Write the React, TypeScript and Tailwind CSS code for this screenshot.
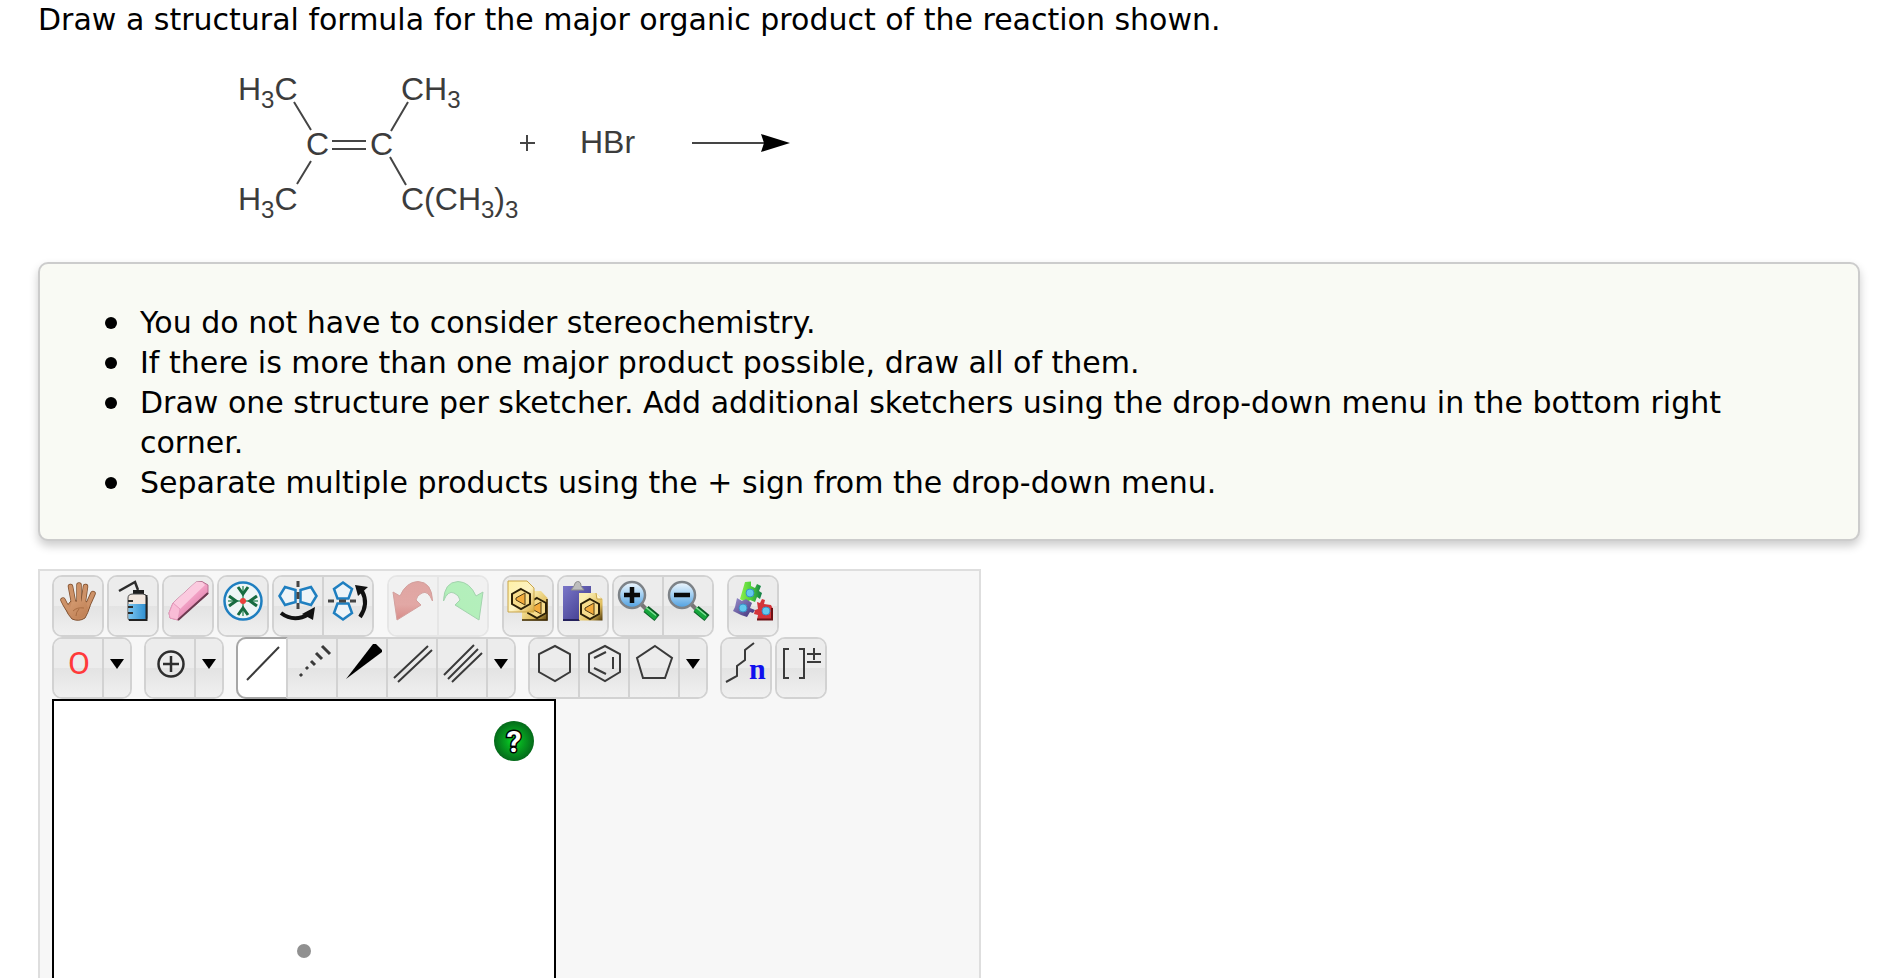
import type { ReactNode } from 'react';

interface Tool {
  id: string;
  label: string;
  icon?: ReactNode;
  active?: boolean;
}

interface ToolGroupProps {
  tools: Tool[];
  disabled?: boolean;
  menu?: string;
}

const INK = '#3a3a3a';
const BLUE = '#1f7fc0';

const notes = [
  'You do not have to consider stereochemistry.',
  'If there is more than one major product possible, draw all of them.',
  'Draw one structure per sketcher. Add additional sketchers using the drop-down menu in the bottom right corner.',
  'Separate multiple products using the + sign from the drop-down menu.',
];

function Icon({ children }: { children: ReactNode }) {
  return (
    <svg className="w-10 h-10 shrink-0 overflow-visible" viewBox="0 0 40 40" fill="none" aria-hidden="true">
      {children}
    </svg>
  );
}

function Gradients() {
  return (
    <svg className="absolute w-0 h-0" aria-hidden="true">
      <defs>
        <linearGradient id="skin" x1="0" y1="0" x2="1" y2="1">
          <stop offset="0" stopColor="#d39a70" />
          <stop offset="1" stopColor="#bd7c50" />
        </linearGradient>
        <linearGradient id="water" x1="0" y1="0" x2="1" y2="0">
          <stop offset="0" stopColor="#7cc6f0" />
          <stop offset="1" stopColor="#2f8fd0" />
        </linearGradient>
        <linearGradient id="pink" x1="0.2" y1="0.2" x2="0.75" y2="0.8">
          <stop offset="0" stopColor="#fbd3e4" />
          <stop offset="0.45" stopColor="#f5a5c8" />
          <stop offset="1" stopColor="#dd7fab" />
        </linearGradient>
        <linearGradient id="undoRed" x1="0" y1="0" x2="0" y2="1">
          <stop offset="0" stopColor="#dfa5a2" />
          <stop offset="0.6" stopColor="#e2a8a5" />
          <stop offset="1" stopColor="#d78b88" />
        </linearGradient>
        <linearGradient id="redoGreen" x1="0" y1="0" x2="1" y2="1">
          <stop offset="0" stopColor="#b4efbd" />
          <stop offset="0.6" stopColor="#b3efba" />
          <stop offset="1" stopColor="#7fc596" />
        </linearGradient>
        <linearGradient id="page" x1="0" y1="0" x2="1" y2="1">
          <stop offset="0" stopColor="#fff1a6" />
          <stop offset="0.55" stopColor="#fdf3c4" />
          <stop offset="1" stopColor="#d9a93a" />
        </linearGradient>
        <linearGradient id="pageDark" x1="0.2" y1="0.2" x2="1" y2="1">
          <stop offset="0" stopColor="#fbeeb2" />
          <stop offset="0.6" stopColor="#e0bd5c" />
          <stop offset="1" stopColor="#4e3606" />
        </linearGradient>
        <linearGradient id="board" x1="0" y1="0" x2="1" y2="1">
          <stop offset="0" stopColor="#7a76c8" />
          <stop offset="1" stopColor="#3a3688" />
        </linearGradient>
        <linearGradient id="lens" x1="0" y1="0" x2="0" y2="1">
          <stop offset="0" stopColor="#f0f7fd" />
          <stop offset="0.45" stopColor="#a9d3f3" />
          <stop offset="1" stopColor="#4d9fe0" />
        </linearGradient>
        <linearGradient id="pieceGreen" x1="0" y1="0" x2="1" y2="0">
          <stop offset="0" stopColor="#8cf04c" />
          <stop offset="0.5" stopColor="#4fd03a" />
          <stop offset="1" stopColor="#0f7a48" />
        </linearGradient>
        <linearGradient id="piecePurple" x1="0" y1="0" x2="1" y2="1">
          <stop offset="0" stopColor="#9a90cc" />
          <stop offset="1" stopColor="#3d2f78" />
        </linearGradient>
        <radialGradient id="help">
          <stop offset="0" stopColor="#0be028" />
          <stop offset="0.4" stopColor="#06a820" />
          <stop offset="1" stopColor="#04691a" />
        </radialGradient>
      </defs>
    </svg>
  );
}

const handLines = (
  <>
    <path d="M14 31 Q9 28 5 19" />
    <path d="M16 24 L12.500 5.500" />
    <path d="M21 22 L21 4" />
    <path d="M25 23 L27.500 5.500" />
    <path d="M28 28 L35 12.500" />
  </>
);

const hand = (
  <Icon>
    <g stroke="#80502e" strokeWidth="5.500" strokeLinecap="round">{handLines}</g>
    <path d="M13 20 H28 L32 25 Q30 32 27 37 Q21 41 14 38 Q10 34 7 27 Z" fill="#c98c62" stroke="#80502e" strokeWidth="1" />
    <g stroke="#cd9268" strokeWidth="4" strokeLinecap="round">{handLines}</g>
    <path d="M14 21 H28 L30 27 Q29 32 26 36 Q21 39 15 37 Q11 33 12 27 Z" fill="url(#skin)" />
    <path d="M15 30 Q19 26 26 27 M21 28 Q18 31 18 35" stroke="#a86c42" strokeWidth="1" />
  </Icon>
);

const bottle = (
  <Icon>
    <path d="M6 10 L22 1 L25 9" stroke="#2c2c2c" strokeWidth="2.500" />
    <path d="M20 9 H31 V14 H20 Z" fill="#1e1e1e" />
    <path d="M15 17 Q15 13 20 13 H30 Q34 13 34 17 V37 Q34 39.500 31 39.500 H17 Q15 39.500 15 37 Z" fill="#f1e6de" stroke="#4a4a4a" strokeWidth="1" />
    <path d="M15.500 23 H33 V37 Q33 39 31 39 H17 Q15.500 39 15.500 37 Z" fill="url(#water)" />
    <path d="M33.500 14 V39 H16" stroke="#222" strokeWidth="2" />
    <path d="M15 20 H20 M15 26 H20 M15 32 H20" stroke="#2b2b2b" strokeWidth="2" />
  </Icon>
);

const eraser = (
  <Icon>
    <path d="M1 32 L5 22 L28 1 L34 0.500 L40 4 V13 L10 39 L2 37 Z" fill="url(#pink)" stroke="#b57391" strokeWidth="1" />
    <path d="M5 22 L28 1 L34 1 L37 4 L12 28 Z" fill="#fbcadf" />
    <path d="M1 32 L5 22 L12 28 L10 39 L2 37 Z" fill="#f9bcd6" stroke="#e79bbd" strokeWidth="1" />
    <path d="M40 12 L10 39" stroke="#6c3a50" strokeWidth="2" />
  </Icon>
);

const center = (
  <Icon>
    <circle cx="20" cy="20" r="18.500" fill="#eef5f6" stroke={BLUE} strokeWidth="2.500" />
    {[0, 90, 180, 270].map(angle => (
      <g key={angle} transform={`rotate(${angle} 20 20)`}>
        <path d="M20 5 V18" stroke="#6fae8e" strokeWidth="2" />
        <path d="M15 6 L20 13 L25 6" stroke="#176b40" strokeWidth="3" />
      </g>
    ))}
    <circle cx="20" cy="20" r="3" fill="#e8413c" />
  </Icon>
);

const flipHorizontal = (
  <Icon>
    <g stroke={BLUE} strokeWidth="2.500">
      <path d="M1.500 15 L7 6 L17.500 9 V21 L7 24 Z" fill="#eef4f8" />
      <path d="M38.500 15 L33 6 L22.500 9 V21 L33 24 Z" fill="#eef4f8" />
    </g>
    <path d="M20 0 V6 M20 11 V18 M20 22 V28" stroke="#444" strokeWidth="3" />
    <path d="M3 32 Q16 42 31 33" stroke="#111" strokeWidth="4" />
    <path d="M37 26 L24 33 L35 39 Z" fill="#111" />
  </Icon>
);

const flipVertical = (
  <Icon>
    <g stroke={BLUE} strokeWidth="2.500">
      <path d="M15 1.500 L24 8 L20.500 17.500 H9.500 L6 8 Z" fill="#eef4f8" />
      <path d="M15 38.500 L24 32 L20.500 22.500 H9.500 L6 32 Z" fill="#eef4f8" />
    </g>
    <path d="M0 20 H6 M11 20 H18 M22 20 H28" stroke="#444" strokeWidth="3" />
    <path d="M32 36 Q41 23 34 10" stroke="#111" strokeWidth="4" />
    <path d="M27 4 L40 6 L30 15 Z" fill="#111" />
  </Icon>
);

const arrowShape = 'M0 11 L7 15 Q13 1 25 0.500 Q39 1 39.500 20 Q35 9 29 12 Q24 14 23 19 L28 24 L4 39 Z';

const undo = (
  <Icon>
    <path d={arrowShape} fill="url(#undoRed)" stroke="#d3a09d" strokeWidth="1" />
  </Icon>
);

const redo = (
  <Icon>
    <path d={arrowShape} transform="matrix(-1 0 0 1 40 0)" fill="url(#redoGreen)" stroke="#a3d3ae" strokeWidth="1" />
  </Icon>
);

function MoleculeBadge({ x, y }: { x: number; y: number }) {
  return (
    <g transform={`translate(${x} ${y})`}>
      <path d="M0 -10 L9 -5 V5 L0 10 L-9 5 V-5 Z" fill="#f7dc8c" stroke="#2b2008" strokeWidth="2" />
      <path d="M4 -6 V6 L-5 1 V-1 Z" fill="#f3ab3c" stroke="#4d3a14" strokeWidth="1" />
    </g>
  );
}

const copy = (
  <Icon>
    <path d="M14 10 H33 L39.500 17 V39.500 H14 Z" fill="url(#pageDark)" />
    <path d="M39 18 V39 H14" stroke="#3b2804" strokeWidth="1.500" />
    <MoleculeBadge x={29} y={27} />
    <path d="M0 0 H19 L26 7 V31 H0 Z" fill="url(#page)" stroke="#c9a548" strokeWidth="1" />
    <MoleculeBadge x={13} y={18} />
  </Icon>
);

const paste = (
  <Icon>
    <path d="M0 5 H28 V39 H0 Z" fill="url(#board)" />
    <path d="M8 9 L11 5 Q12 0.500 14.500 0.500 Q18 0.500 18 5 L21 9 Z" fill="#bdbdbd" stroke="#8d8d8d" strokeWidth="1" />
    <path d="M0 39 H17" stroke="#24215c" strokeWidth="2" />
    <path d="M16 12 H33 L39.500 18 V39.500 H16 Z" fill="url(#pageDark)" />
    <path d="M33 12 L34 18 H39" fill="#fff6d6" stroke="#c9a548" strokeWidth="1" />
    <MoleculeBadge x={27} y={28} />
  </Icon>
);

function Magnifier({ sign }: { sign: string }) {
  return (
    <Icon>
      <path d="M23 23 L29 29" stroke="#777" strokeWidth="4" />
      <path d="M28 28 L39 37" stroke="#0b5a24" strokeWidth="8" />
      <path d="M27.500 28 L38 37" stroke="#16a53c" strokeWidth="5" />
      <path d="M28 26.500 L38 34.500" stroke="#7fe095" strokeWidth="1.500" />
      <circle cx="14" cy="14" r="13" fill="url(#lens)" stroke="#7d8287" strokeWidth="2.500" />
      <path d={sign} stroke="#0a0a0a" strokeWidth="4.500" />
    </Icon>
  );
}

const puzzle = (
  <Icon>
    <path d="M12 1 L18 0.500 L18 5 L22 7 L24 3 L28 5 L26 10 L29 12 L27 18 L24 16 L22 21 L17 19 L14 22 L7 18 Z" fill="url(#pieceGreen)" />
    <path d="M4 17 L9 20 L13 18 L19 22 L17 27 L22 29 L20 32 L17 31 L14 36 L8 34 L0 30 L2 26 Z" fill="url(#piecePurple)" />
    <path d="M24 21 L27 22 L29 18 L32 19 L31 23 L38 24 L40 28 L39 39 L24 39 L25 34 L21 33 L22 29 L25 28 Z" fill="#d3343a" />
    <path d="M39 27 V38.500 H24" stroke="#6e1014" strokeWidth="2" />
    <g fill="#62c8ee" stroke="#3a90c8" strokeWidth="1">
      <circle cx="17" cy="12" r="4" />
      <circle cx="10" cy="27" r="4" />
      <circle cx="33" cy="30" r="4" />
    </g>
  </Icon>
);

const oxygen = (
  <Icon>
    <text x="21" y="31" textAnchor="middle" fontSize="32" fill="#ff3a3a" className="font-[Roboto,sans-serif]">
      O
    </text>
  </Icon>
);

const charge = (
  <Icon>
    <circle cx="21" cy="21" r="12.500" stroke="#2e2e2e" strokeWidth="2.500" />
    <path d="M21 13 V29 M13 21 H29" stroke="#2e2e2e" strokeWidth="2.500" />
  </Icon>
);

function Lines({ d }: { d: string }) {
  return (
    <Icon>
      <path d={d} stroke={INK} strokeWidth="2" />
    </Icon>
  );
}

const hexagon = 'M21 3 L36 11 V29 L21 38 L5 29 V11 Z';

const repeatUnit = (
  <Icon>
    <path d="M28 0 L19 7 V17 L11 23 V33 L0 39" stroke={INK} strokeWidth="2" />
    <text x="23" y="36" fontSize="30" fontWeight="bold" fill="#1111ee" className="font-['Liberation_Serif',serif]">
      n
    </text>
  </Icon>
);

const caret = (
  <svg className="w-[14px] h-[10px] mt-4" viewBox="0 0 14 10" aria-hidden="true">
    <path d="M0 0 H14 L7 10 Z" fill="#000" />
  </svg>
);

function ToolGroup({ tools, disabled, menu }: ToolGroupProps) {
  return (
    <div
      className={`flex h-[62px] rounded-[10px] border-2 divide-x-2 ${
        disabled ? 'border-[#e6e6e6] divide-[#e6e6e6]' : 'border-[#d2d2d2] divide-[#d2d2d2]'
      }`}
    >
      {tools.map((tool, i) => (
        <button
          key={tool.id}
          type="button"
          aria-label={tool.label}
          disabled={disabled}
          className={`flex items-start pt-1 pl-1 first:rounded-l-[8px] last:rounded-r-[8px] ${
            tool.active
              ? '-my-[2px] -ml-[2px] w-[52px] first:rounded-l-[10px] border-y-2 border-l-2 border-y-[#a6a6a6] border-l-[#a6a6a6] bg-white'
              : i < tools.length - 1 || menu
                ? 'w-[50px]'
                : 'w-12'
          } ${
            disabled
              ? 'bg-[#f1f1f1]'
              : tool.active
                ? ''
                : 'bg-[linear-gradient(#ececec_0%,#ececec_50%,#e3e3e3_50%,#f0f0f0_100%)]'
          }`}
        >
          {tool.icon}
        </button>
      ))}
      {menu && (
        <button
          type="button"
          aria-label={menu}
          className="flex items-start justify-center w-[26px] pt-1 rounded-r-[8px] bg-[linear-gradient(#ececec_0%,#ececec_50%,#e3e3e3_50%,#f0f0f0_100%)]"
        >
          {caret}
        </button>
      )}
    </div>
  );
}

function Reaction() {
  return (
    <svg className="block w-[760px] h-[180px] mt-5 font-['Liberation_Sans',Arial,sans-serif]" viewBox="38 60 760 180" role="img" aria-label="Reaction">
      <g fill="#3c3c3c" fontSize="32">
        <text x="238" y="100">
          H<tspan fontSize="24" dy="8">3</tspan><tspan dy="-8">C</tspan>
        </text>
        <text x="401" y="100">
          CH<tspan fontSize="24" dy="8">3</tspan>
        </text>
        <text x="306" y="155">C</text>
        <text x="370" y="155">C</text>
        <text x="238" y="210">
          H<tspan fontSize="24" dy="8">3</tspan><tspan dy="-8">C</tspan>
        </text>
        <text x="401" y="210">
          C(CH<tspan fontSize="24" dy="8">3</tspan><tspan dy="-8">)</tspan><tspan fontSize="24" dy="8">3</tspan>
        </text>
        <text x="580" y="153">HBr</text>
      </g>
      <g stroke="#454545" strokeWidth="2">
        <path d="M294 102 L311 130 M311 161 L297 184 M408 102 L391 131 M390 157 L406 185" />
        <path d="M332 141 H366 M332 149 H366 M520 143 H535 M527 135 V151" />
        <path d="M692 143 H766" />
      </g>
      <path d="M761 134 L790 143 L761 152 L764 143 Z" fill="#000" />
    </svg>
  );
}

export default function App() {
  return (
    <main className="h-screen overflow-hidden bg-white pl-[38px] pr-11 font-['DejaVu_Sans',Verdana,sans-serif] text-[30px] leading-10 text-black">
      <Gradients />
      <p>Draw a structural formula for the major organic product of the reaction shown.</p>
      <Reaction />

      <section className="mt-[22px] rounded-[10px] border-2 border-[#cccccc] bg-[#f9faf4] pt-[39px] pb-9 pl-[65px] pr-10 shadow-[0_5px_10px_rgba(0,0,0,0.2)]">
        <ul>
          {notes.map(note => (
            <li key={note} className="flex items-start">
              <span className="w-3 h-3 mt-[14px] mr-[23px] shrink-0 rounded-full bg-black"></span>
              <span>{note}</span>
            </li>
          ))}
        </ul>
      </section>

      <section className="mt-7 w-[943px] max-w-full border-2 border-[#dedede] bg-[#f7f7f7] pt-1 px-3 pb-3">
        <div className="flex gap-[13px]">
          <div className="flex gap-[3px]">
            <ToolGroup tools={[{ id: 'move', label: 'Move', icon: hand }]} />
            <ToolGroup tools={[{ id: 'clear', label: 'Clear', icon: bottle }]} />
            <ToolGroup tools={[{ id: 'erase', label: 'Erase', icon: eraser }]} />
            <ToolGroup tools={[{ id: 'center', label: 'Center', icon: center }]} />
            <ToolGroup
              tools={[
                { id: 'flip-h', label: 'Flip horizontally', icon: flipHorizontal },
                { id: 'flip-v', label: 'Flip vertically', icon: flipVertical },
              ]}
            />
          </div>
          <ToolGroup
            disabled
            tools={[
              { id: 'undo', label: 'Undo', icon: undo },
              { id: 'redo', label: 'Redo', icon: redo },
            ]}
          />
          <div className="flex gap-[3px]">
            <ToolGroup tools={[{ id: 'copy', label: 'Copy', icon: copy }]} />
            <ToolGroup tools={[{ id: 'paste', label: 'Paste', icon: paste }]} />
            <ToolGroup
              tools={[
                { id: 'zoom-in', label: 'Zoom in', icon: <Magnifier sign="M6 14 H22 M14 6 V22" /> },
                { id: 'zoom-out', label: 'Zoom out', icon: <Magnifier sign="M6 14 H22" /> },
              ]}
            />
          </div>
          <ToolGroup tools={[{ id: 'templates', label: 'Templates', icon: puzzle }]} />
        </div>

        <div className="flex gap-3">
          <ToolGroup tools={[{ id: 'atom', label: 'Oxygen', icon: oxygen }]} menu="More atoms" />
          <ToolGroup tools={[{ id: 'charge', label: 'Increase charge', icon: charge }]} menu="More charges" />
          <ToolGroup
            menu="More bonds"
            tools={[
              { id: 'single', label: 'Single bond', active: true, icon: <Lines d="M5 37 L37 4" /> },
              { id: 'hash', label: 'Recessed bond', icon: (
                <Icon>
                  <path d="M8 31 L10 33 M14 24 L16 26 M19 18 L23 22 M24 10 L30 16 M30 3 L38 11" stroke={INK} strokeWidth="3" />
                </Icon>
              ) },
              { id: 'wedge', label: 'Protruding bond', icon: (
                <Icon>
                  <path d="M4 36 L31 1 L34 1 L40 7 V9 Z" fill="#000" />
                </Icon>
              ) },
              { id: 'double', label: 'Double bond', icon: <Lines d="M2 35 L36 3 M6 39 L40 7" /> },
              { id: 'triple', label: 'Triple bond', icon: <Lines d="M2 32 L32 2 M6 36 L36 6 M10 39 L40 10" /> },
            ]}
          />
          <ToolGroup
            menu="More rings"
            tools={[
              { id: 'cyclohexane', label: 'Cyclohexane', icon: <Lines d={hexagon} /> },
              { id: 'benzene', label: 'Benzene', icon: <Lines d={`${hexagon} M10 15 L22 9 M29 14 V26 M10 25 L22 31`} /> },
              { id: 'cyclopentane', label: 'Cyclopentane', icon: <Lines d="M21 3 L38 15 L31 35 H9 L3 15 Z" /> },
            ]}
          />
          <div className="flex gap-[3px]">
            <ToolGroup tools={[{ id: 'repeat', label: 'Repeating unit', icon: repeatUnit }]} />
            <ToolGroup
              tools={[{ id: 'bracket', label: 'Bracket charge', icon: <Lines d="M8 6 H3 V35 H8 M18 6 H23 V35 H18 M26 11 H40 M33 5 V17 M26 19 H40" /> }]}
            />
          </div>
        </div>

        <div className="relative flex items-center justify-center w-[504px] h-[504px] border-2 border-black bg-white">
          <button type="button" aria-label="Help" className="absolute top-5 right-5">
            <svg className="block w-10 h-10" viewBox="0 0 40 40" aria-hidden="true">
              <circle cx="20" cy="20" r="20" fill="url(#help)" />
              <text
                x="20"
                y="31"
                textAnchor="middle"
                fontSize="30"
                fontWeight="bold"
                fill="#fff"
                stroke="#000"
                strokeWidth="3"
                paintOrder="stroke"
                className="font-[Roboto,sans-serif]"
              >
                ?
              </text>
            </svg>
          </button>
          <span className="w-[14px] h-[14px] rounded-full bg-[#909090]"></span>
        </div>
      </section>
    </main>
  );
}
